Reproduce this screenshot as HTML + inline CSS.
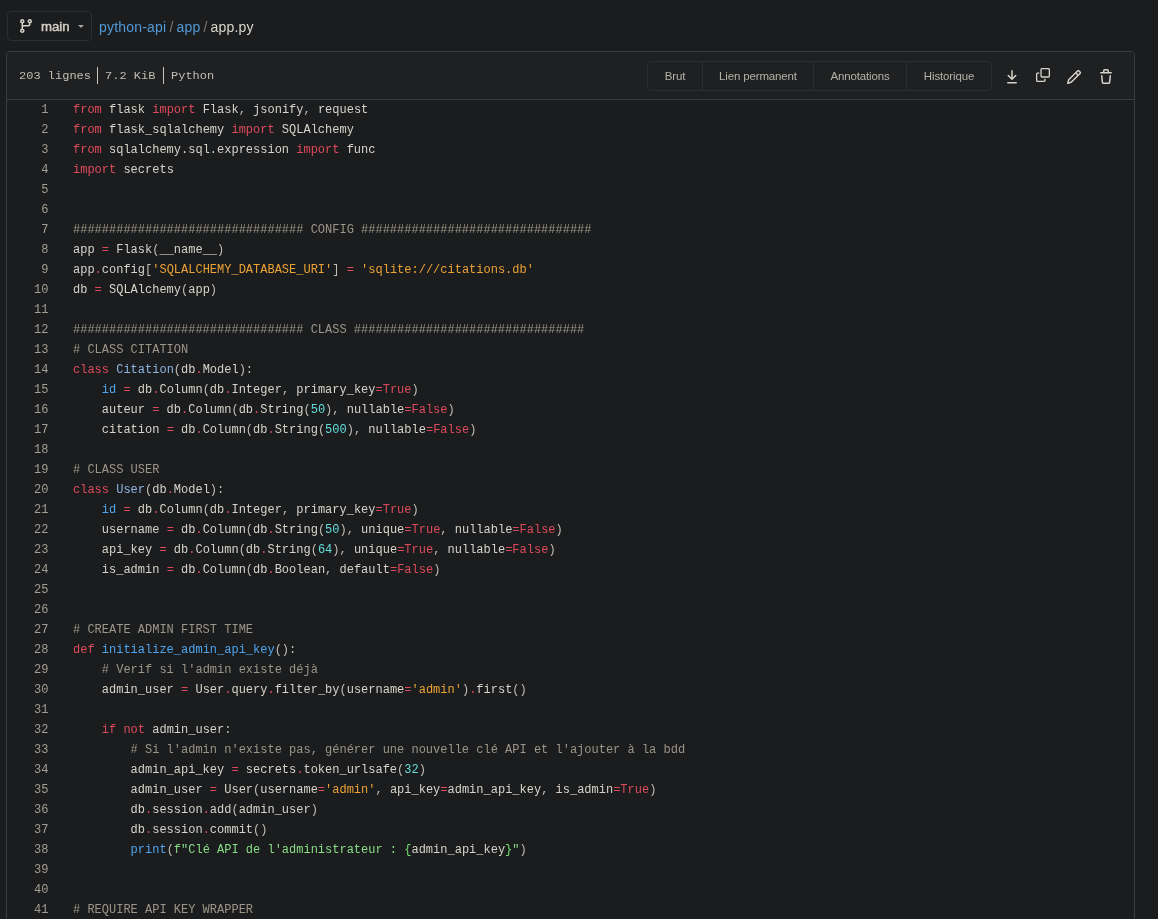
<!DOCTYPE html>
<html><head><meta charset="utf-8">
<style>
*{box-sizing:border-box;margin:0;padding:0}
html{-webkit-font-smoothing:antialiased}body{will-change:transform}html,body{width:1158px;height:919px;overflow:hidden;background:#1b1c1d;font-family:"Liberation Sans",sans-serif;color:#d8d4cc}
.branch{position:absolute;left:7px;top:11px;width:85px;height:30px;border:1px solid #2b2d2e;border-radius:4px;}
.branch svg{position:absolute;left:10px;top:6px}
.branch .nm{position:absolute;left:33px;top:7px;font-size:13.2px;-webkit-text-stroke:0.5px #d2ccc3;color:#d2ccc3;transform:scaleY(.92);transform-origin:0 17px}
.branch .caret{position:absolute;left:70px;top:13px;width:0;height:0;border-left:3.5px solid transparent;border-right:3.5px solid transparent;border-top:3.5px solid #a8a39c}
.crumb{position:absolute;left:99px;top:18.5px;font-size:14px;letter-spacing:0.2px;white-space:nowrap}
.crumb a{color:#509ad8;text-decoration:none}
.crumb .sl{color:#7d7973;margin:0 3px}
.crumb .cur{color:#dad6ce}
.box{position:absolute;left:6px;top:51px;width:1129px;height:900px;border:1px solid #393d40;border-radius:4px;background:#1b1c1d;overflow:hidden}
.hdr{position:absolute;left:0;top:0;width:100%;height:48px;border-bottom:1px solid #393d40;background:#1f2021}
.info{position:absolute;left:12px;top:17px;font-family:"Liberation Mono",monospace;font-size:12px;color:#c2bcb3;white-space:nowrap;transform:scaleY(.84);transform-origin:0 13px}
.sep{position:absolute;top:15px;width:1px;height:17px;background:#c9c4bc}
.btns{position:absolute;left:640px;top:9px;height:30px;border:1px solid #2b2d2e;border-radius:4px;display:flex}
.btns div{height:28px;line-height:28px;font-size:11.5px;letter-spacing:-0.15px;color:#b5b0a8;text-align:center;border-left:1px solid #2b2d2e}
.btns div:first-child{border-left:none}
.ic{position:absolute;top:16px}
table{position:absolute;left:0;top:48px;border-collapse:collapse;font-family:"Liberation Mono",monospace;font-size:12px}
td{height:20px;line-height:20px;padding:0;white-space:pre;vertical-align:top}
td.ln{width:50px;text-align:right;padding-right:8.6px;color:#a39c92}
td.cd{padding-left:16px}
.k,.kc,.o{color:#dd4a5c}
.n{color:#d8d3ca}
.p{color:#c2bdb5}
.c{color:#9c9589}
.s1{color:#eba337}
.s2{color:#88dd86}
.si{color:#72e070}
.mi{color:#64dcdc}
.nc{color:#8fb5e3}
.nf,.nb{color:#4ea5ee}
</style></head><body>
<div class="branch">
<svg width="16" height="16" viewBox="0 0 16 16"><path fill="#d6d1c9" d="M9.5 3.25a2.25 2.25 0 1 1 3 2.122V6A2.5 2.5 0 0 1 10 8.5H6a1 1 0 0 0-1 1v1.128a2.251 2.251 0 1 1-1.5 0V5.372a2.25 2.25 0 1 1 1.5 0v1.836A2.493 2.493 0 0 1 6 7h4a1 1 0 0 0 1-1v-.628A2.25 2.25 0 0 1 9.5 3.25Zm-6 0a.75.75 0 1 0 1.5 0 .75.75 0 0 0-1.5 0Zm8.25-.75a.75.75 0 1 0 0 1.5.75.75 0 0 0 0-1.5ZM4.25 12a.75.75 0 1 0 0 1.5.75.75 0 0 0 0-1.5Z"/></svg>
<span class="nm">main</span><span class="caret"></span>
</div>
<div class="crumb"><a>python-api</a><span class="sl">/</span><a>app</a><span class="sl">/</span><span class="cur">app.py</span></div>
<div class="box">
<div class="hdr">
<div class="info" style="left:12px">203 lignes</div><div class="sep" style="left:90px"></div><div class="info" style="left:98px">7.2 KiB</div><div class="sep" style="left:156px"></div><div class="info" style="left:164px">Python</div>
<div class="btns"><div style="width:54px">Brut</div><div style="width:111px">Lien permanent</div><div style="width:93px">Annotations</div><div style="width:85px">Historique</div></div>
<svg class="ic" style="left:997px;top:17px" width="16" height="16" viewBox="0 0 16 16"><path fill="#d6d1c9" d="M7.47 10.78a.75.75 0 0 0 1.06 0l3.75-3.75a.75.75 0 0 0-1.06-1.06L8.75 8.44V1.75a.75.75 0 0 0-1.5 0v6.69L4.78 5.97a.75.75 0 0 0-1.06 1.06l3.75 3.75ZM3.75 13a.75.75 0 0 0 0 1.5h8.5a.75.75 0 0 0 0-1.5h-8.5Z"/></svg>
<svg class="ic" style="left:1029px;top:16px" width="14" height="14" viewBox="0 0 16 16"><path fill="#d6d1c9" d="M0 6.75C0 5.784.784 5 1.75 5h1.5a.75.75 0 0 1 0 1.5h-1.5a.25.25 0 0 0-.25.25v7.5c0 .138.112.25.25.25h7.5a.25.25 0 0 0 .25-.25v-1.5a.75.75 0 0 1 1.5 0v1.5A1.75 1.75 0 0 1 9.250 16h-7.5A1.75 1.75 0 0 1 0 14.25Z M5 1.75C5 .784 5.784 0 6.75 0h7.5C15.216 0 16 .784 16 1.750v7.5A1.75 1.75 0 0 1 14.25 11h-7.5A1.75 1.75 0 0 1 5 9.25Zm1.75-.25a.25.25 0 0 0-.25.25v7.5c0 .138.112.25.25.25h7.5a.25.25 0 0 0 .25-.25v-7.5a.25.25 0 0 0-.25-.25Z"/></svg>
<svg class="ic" style="left:1059px;top:17px" width="16" height="16" viewBox="0 0 16 16"><path fill="#d6d1c9" d="M11.013 1.427a1.75 1.75 0 0 1 2.474 0l1.086 1.086a1.75 1.75 0 0 1 0 2.474l-8.61 8.61c-.21.21-.47.364-.756.445l-3.251.93a.75.75 0 0 1-.927-.928l.929-3.25c.081-.286.235-.547.445-.758l8.61-8.61Zm.176 4.823L9.75 4.81l-6.286 6.287a.253.253 0 0 0-.064.108l-.558 1.953 1.953-.558a.253.253 0 0 0 .108-.064Zm1.238-3.763a.25.25 0 0 0-.354 0L10.811 3.75l1.439 1.44 1.263-1.263a.25.25 0 0 0 0-.354Z"/></svg>
<svg class="ic" style="left:1091px;top:17px" width="16" height="16" viewBox="0 0 16 16"><path fill="#d6d1c9" d="M11 1.75V3h2.25a.75.75 0 0 1 0 1.5H2.75a.75.75 0 0 1 0-1.5H5V1.75C5 .784 5.784 0 6.75 0h2.5C10.216 0 11 .784 11 1.75ZM4.496 6.675l.66 6.6a.25.25 0 0 0 .249.225h5.19a.25.25 0 0 0 .249-.225l.66-6.6a.75.75 0 0 1 1.492.149l-.66 6.6A1.748 1.748 0 0 1 10.595 15h-5.19a1.75 1.75 0 0 1-1.741-1.575l-.66-6.6a.75.75 0 1 1 1.492-.15ZM6.5 1.75V3h3V1.75a.25.25 0 0 0-.25-.25h-2.5a.25.25 0 0 0-.25.25Z"/></svg>
</div>
<table>
<tr><td class="ln">1</td><td class="cd"><span class="k">from</span><span class="n"> flask </span><span class="k">import</span><span class="n"> Flask</span><span class="p">, </span><span class="n">jsonify</span><span class="p">, </span><span class="n">request</span></td></tr>
<tr><td class="ln">2</td><td class="cd"><span class="k">from</span><span class="n"> flask_sqlalchemy </span><span class="k">import</span><span class="n"> SQLAlchemy</span></td></tr>
<tr><td class="ln">3</td><td class="cd"><span class="k">from</span><span class="n"> sqlalchemy.sql.expression </span><span class="k">import</span><span class="n"> func</span></td></tr>
<tr><td class="ln">4</td><td class="cd"><span class="k">import</span><span class="n"> secrets</span></td></tr>
<tr><td class="ln">5</td><td class="cd"></td></tr>
<tr><td class="ln">6</td><td class="cd"></td></tr>
<tr><td class="ln">7</td><td class="cd"><span class="c">################################ CONFIG ################################</span></td></tr>
<tr><td class="ln">8</td><td class="cd"><span class="n">app </span><span class="o">=</span><span class="n"> Flask</span><span class="p">(</span><span class="n">__name__</span><span class="p">)</span></td></tr>
<tr><td class="ln">9</td><td class="cd"><span class="n">app</span><span class="o">.</span><span class="n">config</span><span class="p">[</span><span class="s1">'SQLALCHEMY_DATABASE_URI'</span><span class="p">]</span><span class="n"> </span><span class="o">=</span><span class="n"> </span><span class="s1">'sqlite:///citations.db'</span></td></tr>
<tr><td class="ln">10</td><td class="cd"><span class="n">db </span><span class="o">=</span><span class="n"> SQLAlchemy</span><span class="p">(</span><span class="n">app</span><span class="p">)</span></td></tr>
<tr><td class="ln">11</td><td class="cd"></td></tr>
<tr><td class="ln">12</td><td class="cd"><span class="c">################################ CLASS ################################</span></td></tr>
<tr><td class="ln">13</td><td class="cd"><span class="c"># CLASS CITATION</span></td></tr>
<tr><td class="ln">14</td><td class="cd"><span class="k">class</span><span class="n"> </span><span class="nc">Citation</span><span class="p">(</span><span class="n">db</span><span class="o">.</span><span class="n">Model</span><span class="p">):</span></td></tr>
<tr><td class="ln">15</td><td class="cd"><span class="n">    </span><span class="nb">id</span><span class="n"> </span><span class="o">=</span><span class="n"> db</span><span class="o">.</span><span class="n">Column</span><span class="p">(</span><span class="n">db</span><span class="o">.</span><span class="n">Integer</span><span class="p">, </span><span class="n">primary_key</span><span class="o">=</span><span class="kc">True</span><span class="p">)</span></td></tr>
<tr><td class="ln">16</td><td class="cd"><span class="n">    auteur </span><span class="o">=</span><span class="n"> db</span><span class="o">.</span><span class="n">Column</span><span class="p">(</span><span class="n">db</span><span class="o">.</span><span class="n">String</span><span class="p">(</span><span class="mi">50</span><span class="p">), </span><span class="n">nullable</span><span class="o">=</span><span class="kc">False</span><span class="p">)</span></td></tr>
<tr><td class="ln">17</td><td class="cd"><span class="n">    citation </span><span class="o">=</span><span class="n"> db</span><span class="o">.</span><span class="n">Column</span><span class="p">(</span><span class="n">db</span><span class="o">.</span><span class="n">String</span><span class="p">(</span><span class="mi">500</span><span class="p">), </span><span class="n">nullable</span><span class="o">=</span><span class="kc">False</span><span class="p">)</span></td></tr>
<tr><td class="ln">18</td><td class="cd"></td></tr>
<tr><td class="ln">19</td><td class="cd"><span class="c"># CLASS USER</span></td></tr>
<tr><td class="ln">20</td><td class="cd"><span class="k">class</span><span class="n"> </span><span class="nc">User</span><span class="p">(</span><span class="n">db</span><span class="o">.</span><span class="n">Model</span><span class="p">):</span></td></tr>
<tr><td class="ln">21</td><td class="cd"><span class="n">    </span><span class="nb">id</span><span class="n"> </span><span class="o">=</span><span class="n"> db</span><span class="o">.</span><span class="n">Column</span><span class="p">(</span><span class="n">db</span><span class="o">.</span><span class="n">Integer</span><span class="p">, </span><span class="n">primary_key</span><span class="o">=</span><span class="kc">True</span><span class="p">)</span></td></tr>
<tr><td class="ln">22</td><td class="cd"><span class="n">    username </span><span class="o">=</span><span class="n"> db</span><span class="o">.</span><span class="n">Column</span><span class="p">(</span><span class="n">db</span><span class="o">.</span><span class="n">String</span><span class="p">(</span><span class="mi">50</span><span class="p">), </span><span class="n">unique</span><span class="o">=</span><span class="kc">True</span><span class="p">, </span><span class="n">nullable</span><span class="o">=</span><span class="kc">False</span><span class="p">)</span></td></tr>
<tr><td class="ln">23</td><td class="cd"><span class="n">    api_key </span><span class="o">=</span><span class="n"> db</span><span class="o">.</span><span class="n">Column</span><span class="p">(</span><span class="n">db</span><span class="o">.</span><span class="n">String</span><span class="p">(</span><span class="mi">64</span><span class="p">), </span><span class="n">unique</span><span class="o">=</span><span class="kc">True</span><span class="p">, </span><span class="n">nullable</span><span class="o">=</span><span class="kc">False</span><span class="p">)</span></td></tr>
<tr><td class="ln">24</td><td class="cd"><span class="n">    is_admin </span><span class="o">=</span><span class="n"> db</span><span class="o">.</span><span class="n">Column</span><span class="p">(</span><span class="n">db</span><span class="o">.</span><span class="n">Boolean</span><span class="p">, </span><span class="n">default</span><span class="o">=</span><span class="kc">False</span><span class="p">)</span></td></tr>
<tr><td class="ln">25</td><td class="cd"></td></tr>
<tr><td class="ln">26</td><td class="cd"></td></tr>
<tr><td class="ln">27</td><td class="cd"><span class="c"># CREATE ADMIN FIRST TIME</span></td></tr>
<tr><td class="ln">28</td><td class="cd"><span class="k">def</span><span class="n"> </span><span class="nf">initialize_admin_api_key</span><span class="p">():</span></td></tr>
<tr><td class="ln">29</td><td class="cd"><span class="n">    </span><span class="c"># Verif si l'admin existe déjà</span></td></tr>
<tr><td class="ln">30</td><td class="cd"><span class="n">    admin_user </span><span class="o">=</span><span class="n"> User</span><span class="o">.</span><span class="n">query</span><span class="o">.</span><span class="n">filter_by</span><span class="p">(</span><span class="n">username</span><span class="o">=</span><span class="s1">'admin'</span><span class="p">)</span><span class="o">.</span><span class="n">first</span><span class="p">()</span></td></tr>
<tr><td class="ln">31</td><td class="cd"></td></tr>
<tr><td class="ln">32</td><td class="cd"><span class="n">    </span><span class="k">if</span><span class="n"> </span><span class="k">not</span><span class="n"> admin_user</span><span class="p">:</span></td></tr>
<tr><td class="ln">33</td><td class="cd"><span class="n">        </span><span class="c"># Si l'admin n'existe pas, générer une nouvelle clé API et l'ajouter à la bdd</span></td></tr>
<tr><td class="ln">34</td><td class="cd"><span class="n">        admin_api_key </span><span class="o">=</span><span class="n"> secrets</span><span class="o">.</span><span class="n">token_urlsafe</span><span class="p">(</span><span class="mi">32</span><span class="p">)</span></td></tr>
<tr><td class="ln">35</td><td class="cd"><span class="n">        admin_user </span><span class="o">=</span><span class="n"> User</span><span class="p">(</span><span class="n">username</span><span class="o">=</span><span class="s1">'admin'</span><span class="p">, </span><span class="n">api_key</span><span class="o">=</span><span class="n">admin_api_key</span><span class="p">, </span><span class="n">is_admin</span><span class="o">=</span><span class="kc">True</span><span class="p">)</span></td></tr>
<tr><td class="ln">36</td><td class="cd"><span class="n">        db</span><span class="o">.</span><span class="n">session</span><span class="o">.</span><span class="n">add</span><span class="p">(</span><span class="n">admin_user</span><span class="p">)</span></td></tr>
<tr><td class="ln">37</td><td class="cd"><span class="n">        db</span><span class="o">.</span><span class="n">session</span><span class="o">.</span><span class="n">commit</span><span class="p">()</span></td></tr>
<tr><td class="ln">38</td><td class="cd"><span class="n">        </span><span class="nb">print</span><span class="p">(</span><span class="s2">f"Clé API de l'administrateur : </span><span class="si">{</span><span class="n">admin_api_key</span><span class="si">}</span><span class="s2">"</span><span class="p">)</span></td></tr>
<tr><td class="ln">39</td><td class="cd"></td></tr>
<tr><td class="ln">40</td><td class="cd"></td></tr>
<tr><td class="ln">41</td><td class="cd"><span class="c"># REQUIRE API KEY WRAPPER</span></td></tr>
</table>
</div>
</body></html>
